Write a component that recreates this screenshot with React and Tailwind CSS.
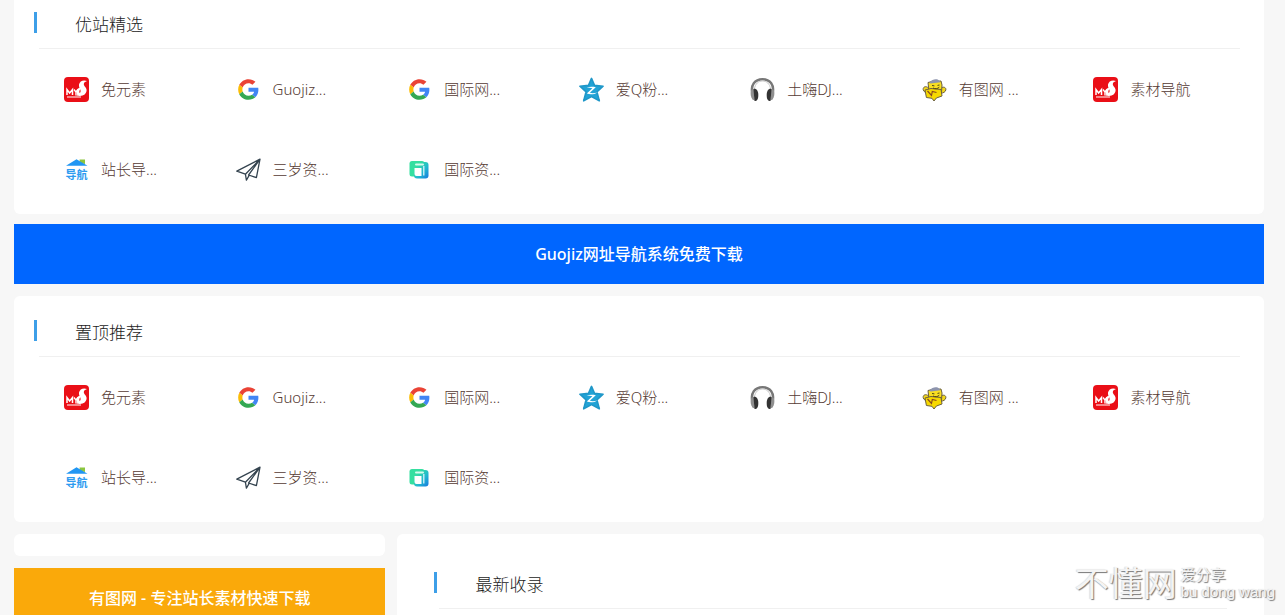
function RedIcon() {
  return (
    <svg viewBox="0 0 25 25" className="size-full">
      <rect width="25" height="25" rx="4" fill="#ea0f17" />
      <path d="M3 18v-5.500l2.600 3.500L8.500 12.500V18" fill="none" stroke="#fff" strokeWidth="1.500" />
      <path d="M10 12.500l2 2.600 2-3M12 15v3.500" fill="none" stroke="#fff" strokeWidth="1.400" />
      <path
        d="M23 4c-3.800-1.400-7.400.2-8 3.600-.5 2.600 1.400 4 1.600 6.200.2 1.600-.6 2.600-3 2.800l-1 1.800c5.600 1.600 9.800-.8 10-5.200.1-2.800-2.600-3.800-2.800-6 0-1.400 1-2.400 3.200-3.200z"
        fill="#fff"
      />
      <path d="M13.500 17.500c-2-2.500-1-5.500 2-7l1 1.500c-1.500 1.500-1.500 3-.5 5z" fill="#fff" />
      <path d="M3 20h14" stroke="#fff" strokeWidth="1" />
    </svg>
  )
}

function GoogleIcon() {
  return (
    <svg viewBox="-5 -5 58 58" className="size-full">
      <path
        fill="#ea4335"
        d="M24 9.500c3.540 0 6.710 1.220 9.210 3.600l6.850-6.850C35.900 2.380 30.470 0 24 0 14.620 0 6.510 5.380 2.560 13.220l7.980 6.190C12.430 13.720 17.740 9.500 24 9.500z"
      />
      <path
        fill="#4285f4"
        d="M46.980 24.550c0-1.570-.15-3.090-.38-4.550H24v9.020h12.940c-.58 2.960-2.260 5.480-4.780 7.180l7.730 6c4.510-4.180 7.090-10.360 7.090-17.650z"
      />
      <path
        fill="#fbbc05"
        d="M10.530 28.590c-.48-1.450-.76-2.990-.76-4.590s.27-3.140.76-4.590l-7.980-6.190C.92 16.460 0 20.120 0 24c0 3.880.92 7.540 2.560 10.780l7.970-6.190z"
      />
      <path
        fill="#34a853"
        d="M24 48c6.480 0 11.930-2.130 15.890-5.810l-7.730-6c-2.150 1.450-4.920 2.300-8.160 2.300-6.260 0-11.570-4.220-13.470-9.910l-7.980 6.190C6.510 42.620 14.620 48 24 48z"
      />
    </svg>
  )
}

function StarIcon() {
  return (
    <svg viewBox="0 0 25 25" className="size-full">
      <path
        d="M12.500 1.400l3 7 8.600.8-6.200 5.600 2.400 9-7.800-4.200-7.800 4.200 2.400-9L.9 9.200l8.600-.8z"
        fill="#22a3d6"
        stroke="#1f97c8"
        strokeWidth="1.600"
        strokeLinejoin="round"
      />
      <path
        d="M7.600 10.400c3-.8 6.400-.8 9.200-.2l-6 5.600c2.600.6 5 .4 7.600-.4-3 2-7 2.400-10.600 1.200l5.600-5.400c-2-.5-3.800-.7-5.800-.8z"
        fill="#fff"
      />
    </svg>
  )
}

function HeadphoneIcon() {
  return (
    <svg viewBox="0 0 25 25" className="size-full">
      <path d="M2.600 17C0 8 5 2.200 12.500 2.200S25 8 22.400 17" fill="none" stroke="#777" strokeWidth="2.400" />
      <path d="M4.400 12C5.200 6.600 8.500 4 12.500 4s7.300 2.600 8.100 8" fill="none" stroke="#c8c8c8" strokeWidth="1" />
      <path d="M1 13.500c-.8 3-.4 6.500 1.600 9.300l2 .4V12.600c-1.600-.6-2.800-.2-3.600.9z" fill="#8f8f8f" />
      <path d="M24 13.500c.8 3 .4 6.500-1.600 9.300l-2 .4V12.600c1.600-.6 2.800-.2 3.600.9z" fill="#8f8f8f" />
      <path d="M3.500 12c3-.8 4.800 2 4.800 6s-1 6-3.800 6z" fill="#333" />
      <path d="M21.500 12c-3-.8-4.800 2-4.800 6s1 6 3.800 6z" fill="#333" />
    </svg>
  )
}

function MascotIcon() {
  return (
    <svg viewBox="0 0 25 25" className="size-full">
      <g stroke="#6b6040" strokeWidth="1" strokeLinejoin="round">
        <path d="M6.500 11C4 8.500.8 9.800 1.200 12.600c.4 2.400 2.800 3.400 5 3z" fill="#f3d71c" />
        <path d="M19 11c2.600-1.800 5.400-.4 4.800 2-.4 1.800-2.600 3.400-5 3z" fill="#f3d71c" />
        <path d="M6 5.500l4-1 9-.5 1 4-.6 8.600-12 1z" fill="#f9df22" />
        <path d="M3 13l6-1.500 10 1 1 6.500-5.600 2-2.400 3-2-2.700-5.600-.8z" fill="#f7d900" />
      </g>
      <path d="M7.600 5.200C10.500 1.600 15.500 1.400 17 3.600l1.500 1.600-10 1.200z" fill="#8d94ad" />
      <path d="M10 8.500l2.400.4M15.500 8.400l2-.4M11 11c2 1.200 4.800.8 6.300-.8" fill="none" stroke="#4c4218" strokeWidth="1" />
      <path d="M5.500 14l4 4.500.8-4 4.200 1" fill="none" stroke="#8a4a1e" strokeWidth="1.200" />
    </svg>
  )
}

function HouseIcon() {
  return (
    <svg viewBox="0 0 25 25" className="size-full">
      <path d="M15.500 2.600H21V7l-5-1z" fill="#8cc63f" />
      <path d="M2 8.800L12.500 2.200 23.500 8.800z" fill="#2196f3" />
      <text
        x="12.500"
        y="21.500"
        textAnchor="middle"
        fontSize="11"
        fontWeight="700"
        fill="#2e9bf0"
        fontFamily="'Noto Sans CJK SC', sans-serif"
      >
        导航
      </text>
    </svg>
  )
}

function PlaneIcon() {
  return (
    <svg
      viewBox="0 0 25 25"
      className="size-full"
      fill="none"
      stroke="#34434f"
      strokeWidth="1.300"
      strokeLinejoin="round"
      strokeLinecap="round"
    >
      <path d="M24 2.200L.8 14.200l8.600 3zM24 2.200L12.600 18l7.800 2.600zM9.400 17.200l1 6 2.600-4.600" />
    </svg>
  )
}

function LayersIcon() {
  return (
    <svg viewBox="0 0 25 25" className="size-full">
      <defs>
        <linearGradient id="layers" x1="0" y1="0" x2="1" y2="1">
          <stop offset="0.200" stopColor="#35dfa0" />
          <stop offset="0.600" stopColor="#22b8cf" />
          <stop offset="1" stopColor="#1677e0" />
        </linearGradient>
      </defs>
      <rect x="2.500" y="4" width="15" height="15.500" rx="2.500" fill="#35dfa0" />
      <rect x="7" y="5" width="14.500" height="16.500" rx="3" fill="url(#layers)" />
      <rect x="8" y="6.500" width="9" height="2" rx="1" fill="#d6fbee" />
      <path d="M7.500 11h7v8h-5a2 2 0 0 1-2-2z" fill="#fff" />
      <rect x="16" y="9" width="1.500" height="9.500" fill="#bfeaf5" />
    </svg>
  )
}

const sites = [
  { name: '免元素', icon: RedIcon },
  { name: 'Guojiz...', icon: GoogleIcon },
  { name: '国际网...', icon: GoogleIcon },
  { name: '爱Q粉...', icon: StarIcon },
  { name: '土嗨DJ...', icon: HeadphoneIcon },
  { name: '有图网 ...', icon: MascotIcon },
  { name: '素材导航', icon: RedIcon },
  { name: '站长导...', icon: HouseIcon },
  { name: '三岁资...', icon: PlaneIcon },
  { name: '国际资...', icon: LayersIcon },
]

function SectionTitle({ children }) {
  return (
    <div>
      <h2 className="flex h-12 items-center gap-[38px] pb-[3px] text-[17px] text-[#1c1c1c]">
        <span className="h-[21px] w-[3px] bg-[#3d9fe8]" />
        <span className="pt-1">{children}</span>
      </h2>
      <hr className="ml-[5px] border-t border-[#f0f0f0]" />
    </div>
  )
}

function SiteCard({ title }) {
  return (
    <section className="rounded-md bg-white pt-3 pr-6 pb-[5px] pl-5">
      <SectionTitle>{title}</SectionTitle>
      <ul className="ml-[5px] grid grid-cols-7">
        {sites.map(({ name, icon: Icon }) => (
          <li key={name} className="flex h-20 items-center pl-[25px]">
            <a href="#" className="flex items-center gap-3 text-[15px] text-[#553a33]">
              <span className="size-[25px] shrink-0">
                <Icon />
              </span>
              {name}
            </a>
          </li>
        ))}
      </ul>
    </section>
  )
}

export default function App() {
  return (
    <div className="relative h-screen overflow-hidden bg-[#f7f7f7] pr-[21px] pl-[14px] font-['Noto_Sans','Noto_Sans_CJK_SC',sans-serif] font-light">
      <main className="-mt-3">
        <SiteCard title="优站精选" />

        <a
          href="#"
          className="mt-[10px] mb-3 flex h-[60px] items-center justify-center bg-[#0066ff] text-base font-medium text-white"
        >
          Guojiz网址导航系统免费下载
        </a>

        <SiteCard title="置顶推荐" />

        <div className="mt-3 grid grid-cols-[3fr_7fr] items-start gap-3">
          <aside>
            <div className="h-[22px] rounded-md bg-white" />
            <a
              href="#"
              className="mt-3 flex h-[60px] items-center justify-center bg-[#faa90a] text-base font-medium text-white"
            >
              有图网 - 专注站长素材快速下载
            </a>
          </aside>
          <section className="h-[300px] rounded-md bg-white px-[37px] pt-[26px]">
            <SectionTitle>最新收录</SectionTitle>
          </section>
        </div>
      </main>

      {/* Watermark */}
      <div className="absolute right-[10px] bottom-3 flex items-center gap-1 font-normal text-[#f4f4f4] [text-shadow:1px_1px_1px_#777,-1px_0_1px_#ddd]">
        <span className="text-[34px] leading-10">不懂网</span>
        <span className="flex flex-col text-[15px] leading-[18px]">
          <span>爱分享</span>
          <span className="font-['Liberation_Sans',sans-serif]">bu dong wang</span>
        </span>
      </div>
    </div>
  )
}
